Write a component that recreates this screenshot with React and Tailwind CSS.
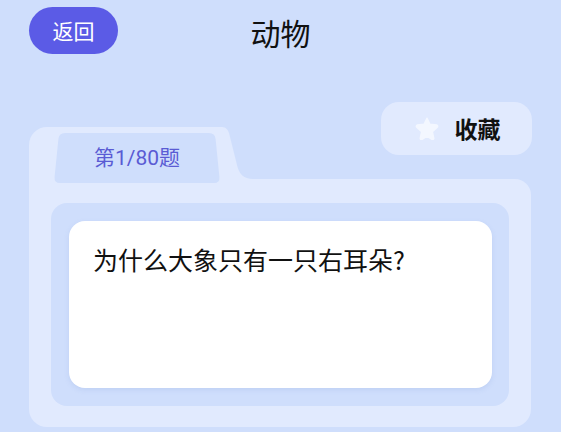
export default function App() {
  const font = { fontFamily: '"Noto Sans CJK SC", Roboto, sans-serif' };
  return (
    <div className="w-[561px] h-[432px] overflow-hidden bg-[#cfdefc] flex flex-col" style={font}>
      {/* header */}
      <div className="h-[61px] grid grid-cols-[1fr_auto_1fr] items-center px-[29px]">
        <div className="flex">
          <button className="w-[89px] h-[47px] rounded-full bg-[#5b5be6] text-white text-[21px] leading-none flex items-center justify-center">
            返回
          </button>
        </div>
        <div className="text-[30px] leading-none text-[#111] mt-[3px]">动物</div>
        <div />
      </div>

      {/* favorite row */}
      <div className="flex justify-end pr-[29px] mt-[41px]">
        <button className="w-[151px] h-[53px] rounded-[18px] bg-[#e1eafe] flex items-center justify-center gap-[16px] pl-[2px]">
          <svg width="24" height="23" viewBox="0 0 24 23">
            <path
              d="M12 1.2 L14.9 7.3 L21.6 8.1 C22.6 8.2 23 9.4 22.3 10.1 L17.3 14.6 L18.7 21.2 C18.9 22.2 17.9 22.9 17 22.4 L12 19.2 L7 22.4 C6.1 22.9 5.1 22.2 5.3 21.2 L6.7 14.6 L1.7 10.1 C1 9.4 1.4 8.2 2.4 8.1 L9.1 7.3 Z"
              fill="#f3f7ff"
              stroke="#f3f7ff"
              strokeWidth="1.5"
              strokeLinejoin="round"
            />
          </svg>
          <span className="text-[23px] font-bold text-[#111] leading-none">收藏</span>
        </button>
      </div>

      {/* folder */}
      <div className="mx-[29px] mr-[30px] -mt-[28px] flex flex-col">
        <div className="h-[52px] flex">
          <div className="w-[193px] h-full bg-[#e1eafe] rounded-tl-[18px] pl-[25px] pt-[6px]">
            <div className="relative z-10 w-[166px] h-[50px] flex items-center justify-center">
              <svg className="absolute inset-0" width="166" height="50" viewBox="0 0 166 50">
                <path
                  d="M11 0 H155 Q161 0 161.6 6 L165.4 44 Q166 50 160 50 H6 Q0 50 0.6 44 L4.4 6 Q5 0 11 0 Z"
                  fill="#cfdefc"
                />
              </svg>
              <span className="relative text-[21px] leading-none text-[#5a5bd4]" style={{ fontFamily: 'Roboto, "Noto Sans CJK SC", sans-serif' }}>
                第1/80题
              </span>
            </div>
          </div>
          <svg width="31" height="52" viewBox="0 0 31 52" className="block">
            <path d="M0 0 C4 0 6 3 7 6 L15 38 C17 47 22 52 31 52 H0 Z" fill="#e1eafe" />
          </svg>
        </div>
        <div className="h-[248px] bg-[#e1eafe] rounded-tr-[16px] rounded-b-[18px] pt-[24px] px-[22px] pb-[21px]">
          <div className="h-full bg-[#cfdefc] rounded-[16px] pt-[18px] pl-[18px] pr-[17px] pb-[18px]">
            <div className="h-full bg-white rounded-[16px] shadow-[0_2px_5px_rgba(120,150,210,0.18)] pt-[20px] pl-[24px]">
              <p className="text-[25px] leading-[36px] text-[#111]">为什么大象只有一只右耳朵?</p>
            </div>
          </div>
        </div>
      </div>
    </div>
  );
}
